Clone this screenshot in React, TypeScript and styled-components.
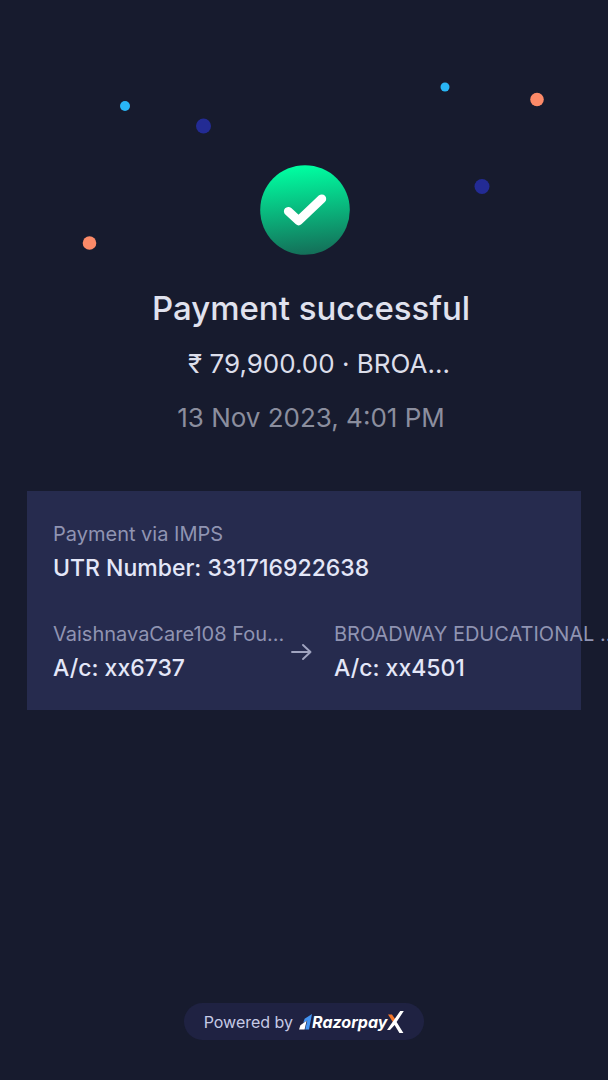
import React from "react";
import styled, { createGlobalStyle } from "styled-components";

const GlobalStyle = createGlobalStyle`
  * { box-sizing: border-box; }
  body {
    margin: 0;
    background: #171b2e;
    font-family: Inter, "Liberation Sans", sans-serif;
    color: #e0e2ee;
  }
`;

const Page = styled.main`
  display: flex;
  flex-direction: column;
  min-height: 100vh;
  padding-bottom: 40px;
  overflow-x: hidden;
`;

const Hero = styled.svg`
  display: block;
  width: 100%;
  max-width: 608px;
  margin: 0 auto;
`;

const Summary = styled.header`
  display: flex;
  flex-direction: column;
  align-items: center;
  padding: 6px 0 0 14px;
`;

const Title = styled.h1`
  margin: 0;
  font-size: 33px;
  line-height: 44px;
  font-weight: 500;
  white-space: nowrap;
`;

const SummaryLine = styled.p<{ $muted?: boolean }>`
  margin: 14px 0 0;
  font-size: 26px;
  line-height: 40px;
  white-space: nowrap;
  color: ${(p) => (p.$muted ? "#8b8e9e" : "#dcdeea")};
  padding-left: ${(p) => (p.$muted ? "0" : "16px")};
`;

const Card = styled.section`
  display: flex;
  flex-direction: column;
  gap: 33px;
  margin: 53px 27px 40px;
  padding: 27px 26px 25px;
  background: #262b4e;
`;

const Transfer = styled.div`
  display: flex;
  align-items: center;
`;

const Party = styled.div<{ $width?: string }>`
  flex: none;
  width: ${(p) => p.$width ?? "auto"};
  white-space: nowrap;
`;

const Label = styled.p`
  margin: 0;
  font-size: 20px;
  line-height: 33px;
  color: #9094b2;
`;

const Value = styled.p`
  margin: 0;
  font-size: 23px;
  line-height: 34px;
  font-weight: 500;
  color: #e4e7f8;
`;

const Arrow = styled.svg`
  flex: none;
  margin-right: 22px;
`;

const Footer = styled.footer`
  display: flex;
  align-items: center;
  align-self: center;
  gap: 6px;
  height: 37px;
  margin-top: auto;
  padding: 0 20px;
  border-radius: 19px;
  background: #1f2242;
  font-size: 16px;
  color: #c6cae6;
`;

const Brand = styled.span`
  display: flex;
  align-items: center;
  color: #fff;
  font-size: 16px;
  font-weight: 700;
  font-style: italic;
`;

const dots = [
  { x: 125, y: 106, r: 5, color: "#29b6f6" },
  { x: 445, y: 87, r: 4.5, color: "#29b6f6" },
  { x: 203.5, y: 126, r: 7.5, color: "#232b94" },
  { x: 482, y: 186.5, r: 7.5, color: "#232b94" },
  { x: 537, y: 99.5, r: 6.8, color: "#fc8a68" },
  { x: 89.5, y: 243, r: 6.8, color: "#fc8a68" },
];

export default function App() {
  return (
    <>
      <GlobalStyle />
      <Page>
        <Hero viewBox="0 0 608 280" aria-hidden="true">
          <defs>
            <linearGradient id="badge" x1="0.45" y1="0" x2="0.55" y2="1">
              <stop offset="0.03" stopColor="#00fca0" />
              <stop offset="1" stopColor="#146e58" />
            </linearGradient>
          </defs>
          {dots.map((d) => (
            <circle key={`${d.x}-${d.y}`} cx={d.x} cy={d.y} r={d.r} fill={d.color} />
          ))}
          <circle cx="305" cy="210" r="44.8" fill="url(#badge)" />
          <path
            d="M288.3 211.3L298.6 220.8L321.8 198.8"
            fill="none"
            stroke="#fff"
            strokeWidth="8.8"
            strokeLinecap="round"
            strokeLinejoin="round"
          />
        </Hero>

        <Summary>
          <Title>Payment successful</Title>
          <SummaryLine>₹ 79,900.00 · BROA...</SummaryLine>
          <SummaryLine $muted>13 Nov 2023, 4:01 PM</SummaryLine>
        </Summary>

        <Card>
          <div>
            <Label>Payment via IMPS</Label>
            <Value>UTR Number: 331716922638</Value>
          </div>
          <Transfer>
            <Party $width="238px">
              <Label>VaishnavaCare108 Fou...</Label>
              <Value>A/c: xx6737</Value>
            </Party>
            <Arrow width="21" height="18" viewBox="0 0 21 18" aria-hidden="true">
              <path
                d="M1 9H19.5M12 2L19.5 9L12 16"
                fill="none"
                stroke="#a0a4c0"
                strokeWidth="1.9"
                strokeLinecap="round"
                strokeLinejoin="round"
              />
            </Arrow>
            <Party>
              <Label>BROADWAY EDUCATIONAL ...</Label>
              <Value>A/c: xx4501</Value>
            </Party>
          </Transfer>
        </Card>

        <Footer>
          Powered by
          <Brand>
            <svg width="13" height="18" viewBox="0 0 13 18" aria-hidden="true">
              <path d="M13 1L10 16.5H6.2L8.3 7.4L4.2 9.8L5.6 5.8Z" fill="#4393f0" />
              <path d="M7.6 7.8L5.6 16.5H0L1.4 12.3Z" fill="#fff" />
            </svg>
            Razorpay
            <svg width="17" height="24" viewBox="0 0 17 24" aria-hidden="true">
              <path d="M1 4.5H5L8.8 10L6.4 12.8Z" fill="#f4772a" />
              <path d="M13.2 1H16.8L9.6 12L16.4 23H12.4L7.6 15L3 20H0Z" fill="#fff" />
            </svg>
          </Brand>
        </Footer>
      </Page>
    </>
  );
}
